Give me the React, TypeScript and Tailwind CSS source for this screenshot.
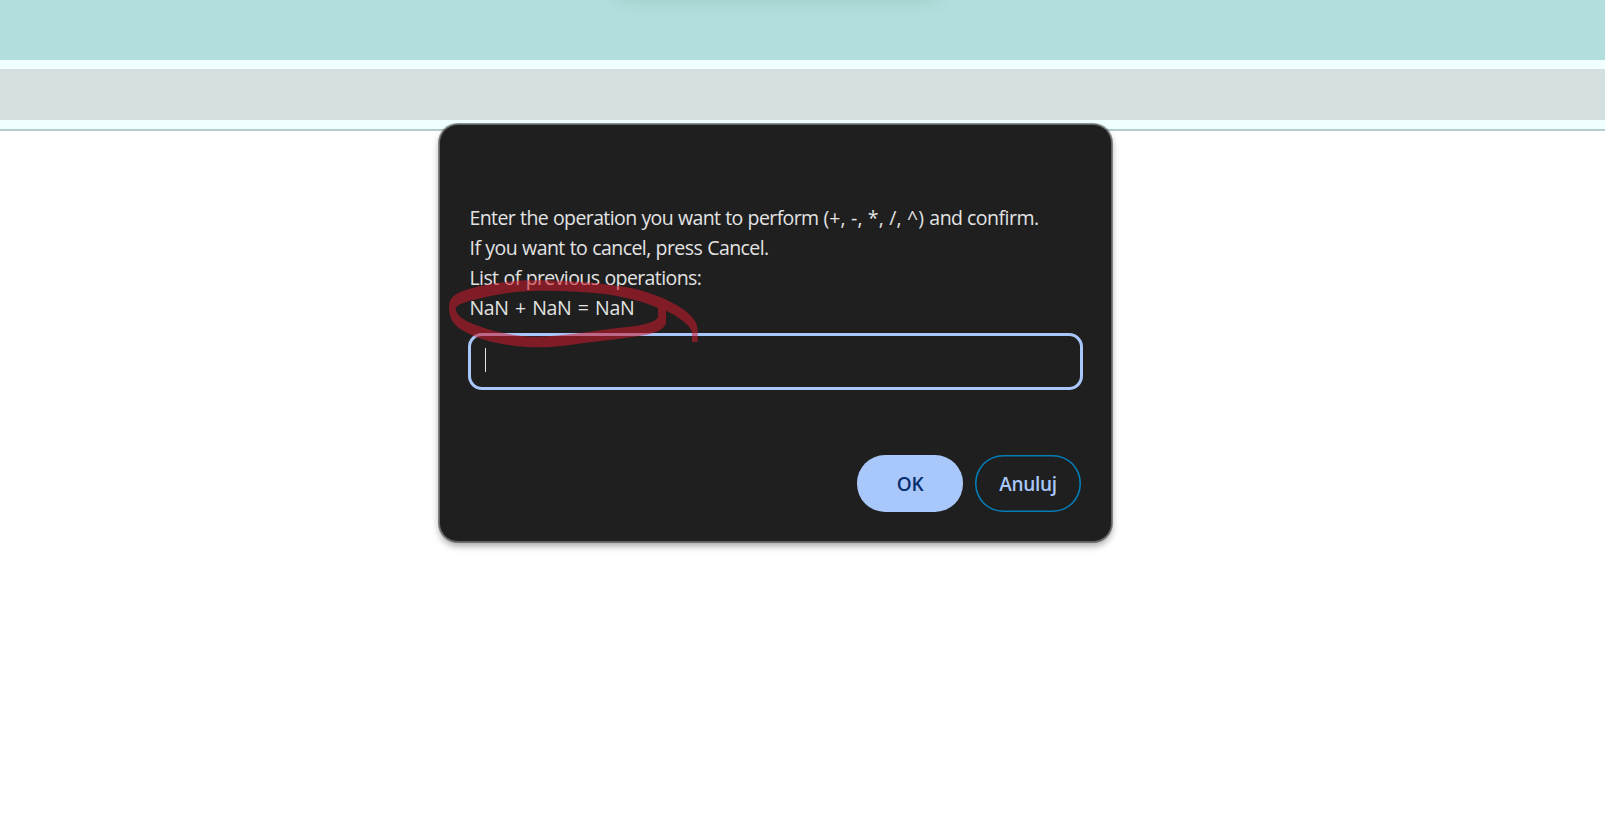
const tight = "tracking-[-0.6px] [word-spacing:0.4px]";

const lines = [
  [
    { text: "Enter the operation you want to perform ", style: tight },
    { text: "(+, -, *, /, ^) ", style: "tracking-[0.15px]" },
    { text: "and confirm.", style: "tracking-[-0.52px]" },
  ],
  [{ text: "If you want to cancel, press Cancel.", style: "tracking-[-0.57px] [word-spacing:0.5px]" }],
  [{ text: "List of previous operations:", style: "tracking-[-0.6px] [word-spacing:0.6px]" }],
  [{ text: "NaN + NaN = NaN", style: "tracking-[-0.35px] [word-spacing:1.7px]" }],
];

function Scribble() {
  return (
    <svg className="pointer-events-none absolute left-0 top-[135px]" width="280" height="140" viewBox="0 0 840 420">
      <path
        fill="#d01a2b"
        fillOpacity="0.55"
        fillRule="evenodd"
        d="M27 140C27 110 48 98 90 86C150 69 220 60 300 61C400 62 520 72 590 88C650 104 702 127 738 154C764 176 773 192 773 215V246H756V216C750 194 715 170 678 152V188C674 207 650 219 610 226C540 238 460 245 390 255C340 262 300 263 260 261C190 257 120 240 75 215C45 200 27 180 27 140ZM47 148C50 168 75 184 110 196C160 215 220 229 290 230C370 229 470 211 560 201C610 196 646 187 654 172V144C620 128 560 112 500 103C430 95 350 91 280 93C210 95 150 107 100 120C65 129 47 136 47 148Z"
      />
    </svg>
  );
}

export default function App() {
  return (
    <div className="relative h-[814px] w-full overflow-hidden bg-white font-['Open_Sans','Noto_Sans',sans-serif]">
      <div className="h-[60px] overflow-hidden bg-[#b2dfdd]">
        <div className="mx-auto -mt-[22px] h-5 w-[320px] -translate-x-[25px] shadow-[0_2px_18px_rgba(0,0,0,0.1)]" />
      </div>
      <div className="h-[71px] border-b-2 border-[#b8cccc] bg-[#f0ffff] py-[9px]">
        <div className="h-[51px] bg-[#d4e0e0]" />
      </div>

      <div
        role="dialog"
        className="absolute left-[439px] top-[124px] flex h-[418px] w-[673px] flex-col rounded-[19px] border border-[#636363] bg-[#1f1f1f] px-[28px] shadow-[0_0_0_1px_rgba(0,0,0,0.4),0_4px_7px_rgba(0,0,0,0.35)]"
      >
        <div className="mt-[78px] flex flex-col items-start pl-[1.5px] text-[19.5px] leading-[30px] text-[#e3e3e3]">
          {lines.map((parts) => (
            <p key={parts[0].text} className="h-[30px] whitespace-pre">
              {parts.map((p) => (
                <span key={p.text} className={p.style}>
                  {p.text}
                </span>
              ))}
            </p>
          ))}
        </div>
        <div className="mt-[10px] flex h-[57px] w-[615px] items-center rounded-[14px] border-[3px] border-[#a8c7fa] pl-[14px]">
          <div className="mb-[3px] h-6 w-px bg-[#e3e3e3]" />
        </div>
        <div className="mt-[65px] flex justify-end gap-3 pr-[2px] text-[19px] font-semibold">
          <button className="h-[57px] w-[106px] rounded-[28px] bg-[#a8c7fa] pt-[2px] tracking-[-0.4px] text-[#062e6f]">
            OK
          </button>
          <button className="h-[57px] w-[106px] rounded-[28px] pt-[2px] tracking-[-0.3px] text-[#a8c7fa] shadow-[inset_0_0_0_1.6px_#047db7]">
            Anuluj
          </button>
        </div>
        <Scribble />
      </div>
    </div>
  );
}
